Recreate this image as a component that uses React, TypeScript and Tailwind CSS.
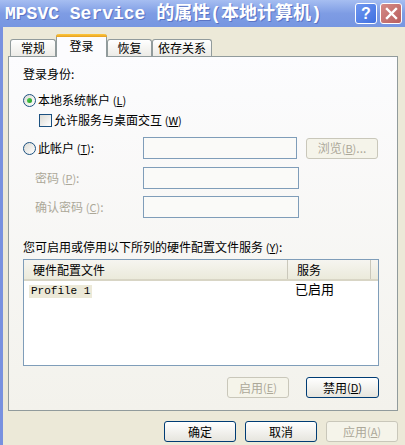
import React from "react";

const ui = { fontFamily: '"Noto Sans CJK SC", "Noto Sans", sans-serif' };
const mono = { fontFamily: '"Liberation Mono", "Noto Sans CJK SC", monospace' };

const Radio = ({ checked = false }: { checked?: boolean }) => (
  <span className="w-[13px] h-[13px] rounded-full border border-[#1C5180] bg-gradient-to-br from-[#DCDBD5] to-white flex items-center justify-center shrink-0">
    {checked && (
      <span className="w-[5px] h-[5px] rounded-full bg-gradient-to-br from-[#55D455] to-[#1E9A1E]" />
    )}
  </span>
);

const Checkbox = () => (
  <span className="w-[13px] h-[13px] border border-[#1C5180] bg-gradient-to-br from-[#DCDBD5] to-white shrink-0" />
);

const Key = ({ k }: { k: string }) => (
  <span className="text-[11px]">
    (<u>{k}</u>)
  </span>
);

const Btn = ({
  children,
  disabled = false,
  className = "",
}: {
  children: React.ReactNode;
  disabled?: boolean;
  className?: string;
}) => (
  <button
    className={
      "h-[21px] rounded-[3px] border flex items-center justify-center text-[12px] leading-none " +
      (disabled
        ? "border-[#C9C7BA] bg-[#F5F4EA] text-[#ACA899] "
        : "border-[#003C74] bg-gradient-to-b from-white to-[#E6E5DE] text-black ") +
      className
    }
    style={ui}
  >
    {children}
  </button>
);

const Input = ({ w = "w-[156px]" }: { w?: string }) => (
  <div className={"h-[22px] border border-[#7F9DB9] bg-[#FAFAF8] " + w} />
);

export default function App() {
  const tabs = [
    { label: "常规", w: "w-[46px]" },
    { label: "登录", w: "w-[51px]", active: true },
    { label: "恢复", w: "w-[45px]" },
    { label: "依存关系", w: "w-[60px]" },
  ];

  return (
    <div className="w-[405px] h-[445px] overflow-hidden bg-[#ECE9D8] flex flex-col text-black" style={ui}>
      {/* Title bar */}
      <div className="h-[27px] shrink-0 flex items-center pl-[5px] pr-[3px] bg-gradient-to-b from-[#A6BEF1] via-[#7E9CE4] to-[#7696E1]">
        <div className="flex-1 text-white font-bold text-[18px] leading-none whitespace-nowrap [text-shadow:1px_1px_0_#5A74C4]" style={mono}>
          MPSVC Service 的属性(本地计算机)
        </div>
        <div className="flex gap-[3px]">
          <div className="w-[22px] h-[21px] rounded-[3px] border border-white bg-gradient-to-br from-[#6F97F0] to-[#3F6FE0] flex items-center justify-center text-white font-bold text-[16px] leading-none" style={{ fontFamily: '"Liberation Sans", sans-serif' }}>
            ?
          </div>
          <div className="w-[22px] h-[21px] rounded-[3px] border border-white bg-gradient-to-br from-[#D58A86] to-[#B85F5F] flex items-center justify-center">
            <svg width="13" height="13" viewBox="0 0 13 13">
              <path d="M2 2 L11 11 M11 2 L2 11" stroke="white" strokeWidth="2.4" strokeLinecap="square" />
            </svg>
          </div>
        </div>
      </div>

      {/* Body */}
      <div className="flex-1 border-l-[3px] border-[#7891DF] pl-[5px] pr-[7px] flex flex-col">
        {/* Tabs */}
        <div className="h-[29px] flex items-end pl-[2px]">
          {tabs.map((t) =>
            t.active ? (
              <div
                key={t.label}
                className={"relative z-10 -mb-px h-[23px] bg-[#FCFCFE] border-x border-[#919B9C] rounded-t-[3px] flex flex-col " + t.w}
              >
                <div className="h-[3px] rounded-t-[3px] bg-gradient-to-b from-[#FFC83C] to-[#E6A020] -mx-px" />
                <div className="flex-1 flex justify-center pt-[1px] text-[12px] leading-[16px]">{t.label}</div>
              </div>
            ) : (
              <div
                key={t.label}
                className={"h-[17px] border-t border-x border-[#919B9C] rounded-t-[3px] bg-gradient-to-b from-white to-[#ECEBE6] flex items-center justify-center text-[12px] leading-none " + t.w}
              >
                {t.label}
              </div>
            )
          )}
        </div>

        {/* Panel */}
        <div className="h-[355px] border border-[#919B9C] bg-gradient-to-b from-[#FCFCFE] to-[#F3F2EC] pl-[14px] pt-[9px] flex flex-col text-[12px]">
          <div className="h-[16px] leading-[16px]">登录身份:</div>

          <div className="mt-[10px] h-[16px] flex items-center">
            <Radio checked />
            <span className="ml-[2px] leading-[16px]">
              本地系统帐户 <Key k="L" />
            </span>
          </div>

          <div className="mt-[4px] h-[16px] flex items-center pl-[16px]">
            <Checkbox />
            <span className="ml-[2px] leading-[16px]">
              允许服务与桌面交互 <Key k="W" />
            </span>
          </div>

          <div className="mt-[9px] h-[22px] flex items-center">
            <div className="w-[120px] flex items-center">
              <Radio />
              <span className="ml-[2px] leading-[16px]">
                此帐户 <Key k="T" />:
              </span>
            </div>
            <Input w="w-[154px]" />
            <Btn disabled className="ml-[9px] w-[72px]">
              浏览 <Key k="B" />...
            </Btn>
          </div>

          <div className="mt-[8px] h-[22px] flex items-center">
            <div className="w-[120px] pl-[12px] text-[#ACA899] leading-[16px]">
              密码 <Key k="P" />:
            </div>
            <Input />
          </div>

          <div className="mt-[7px] h-[22px] flex items-center">
            <div className="w-[120px] pl-[12px] text-[#ACA899] leading-[16px]">
              确认密码 <Key k="C" />:
            </div>
            <Input />
          </div>

          <div className="mt-[21px] h-[16px] leading-[16px]">
            您可启用或停用以下所列的硬件配置文件服务 <Key k="Y" />:
          </div>

          {/* List */}
          <div className="mt-[4px] w-[356px] h-[107px] border border-[#7F9DB9] bg-white flex flex-col">
            <div className="h-[21px] flex items-center bg-gradient-to-b from-[#F6F5F0] to-[#EBEADB] border-b-2 border-[#D8D5C5]">
              <div className="w-[264px] h-full flex items-center pl-[9px] border-r border-[#CAC8BB] my-[3px]">硬件配置文件</div>
              <div className="w-[83px] h-full flex items-center pl-[9px] border-r border-[#CAC8BB]">服务</div>
            </div>
            <div className="h-[13px] mt-[1px] flex items-center">
              <div className="w-[264px] pl-[5px]">
                <span className="bg-[#ECE9D8] px-[2px] text-[11px] leading-[13px] inline-block" style={mono}>
                  Profile 1
                </span>
              </div>
              <div className="pl-[7px] text-[13px] leading-[13px]">已启用</div>
            </div>
          </div>

          <div className="mt-[11px] w-[356px] flex justify-end gap-[17px]">
            <Btn disabled className="w-[62px]">
              启用 <Key k="E" />
            </Btn>
            <Btn className="w-[73px]">
              禁用 <Key k="D" />
            </Btn>
          </div>
        </div>

        {/* Bottom buttons */}
        <div className="mt-[10px] flex justify-end gap-[9px]">
          <Btn className="w-[72px] h-[20px]">确定</Btn>
          <Btn className="w-[72px] h-[20px]">取消</Btn>
          <Btn disabled className="w-[72px] h-[20px]">
            应用 <Key k="A" />
          </Btn>
        </div>
      </div>
    </div>
  );
}
